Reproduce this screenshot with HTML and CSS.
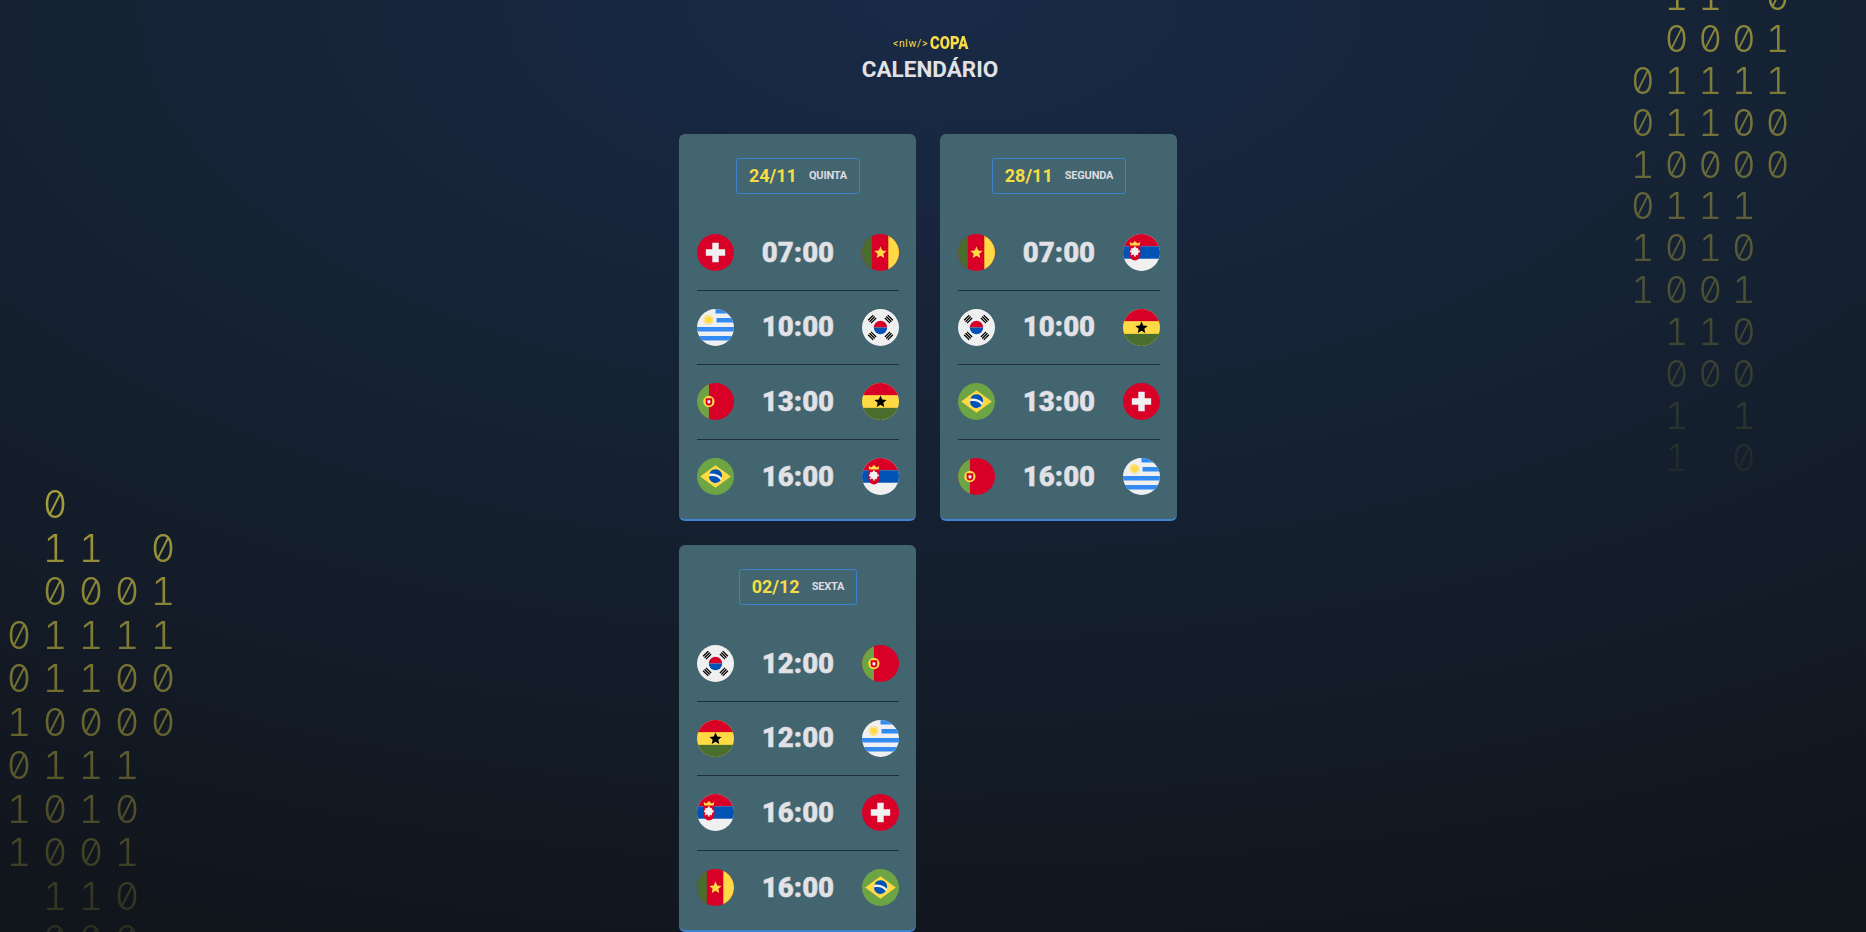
FILE: index.html
```html
<!DOCTYPE html>
<html lang="pt-BR">
<head>
<meta charset="utf-8">
<title>NLW Copa - Calendário</title>
<link rel="stylesheet" href="styles.css">
</head>
<body>
<svg class="defs" width="0" height="0" aria-hidden="true">
  <defs>
    <clipPath id="c"><circle cx="256" cy="256" r="256"/></clipPath>
    <symbol id="star" viewBox="0 0 100 100"><path d="M50 4l13.500 30.800 33.500 3.300-25.200 22.300 7.300 32.800L50 75.900 20.900 93.200l7.300-32.800L3 38.100l33.500-3.300z"/></symbol>
    <symbol id="sw" viewBox="0 0 512 512"><circle cx="256" cy="256" r="256" fill="#d80027"/><path fill="#f0f0f0" d="M389.600 211.500h-89.100v-89.100h-89v89.100h-89.100v89h89.100v89.100h89v-89.100h89.100z"/></symbol>
    <symbol id="cm" viewBox="0 0 512 512"><g clip-path="url(#c)"><rect width="512" height="512" fill="#d80027"/><rect width="136" height="512" fill="#496e2d"/><rect x="364" width="148" height="512" fill="#ffda44"/></g><use href="#star" x="166" y="166" width="180" height="180" fill="#ffda44"/></symbol>
    <symbol id="uy" viewBox="0 0 512 512"><g clip-path="url(#c)"><rect width="512" height="512" fill="#f0f0f0"/><path fill="#338af3" d="M256 0h256v62H256zM270 125h242v62H270zM0 250h512v62H0zM0 375h512v62H0z"/></g><circle cx="160" cy="150" r="46" fill="#ffda44"/><circle cx="160" cy="150" r="60" fill="none" stroke="#ffda44" stroke-width="20" stroke-dasharray="14 10"/></symbol>
    <symbol id="kr" viewBox="0 0 512 512"><circle cx="256" cy="256" r="256" fill="#f0f0f0"/><path fill="#d80027" d="M163 256a93 93 0 0 1 186 0z"/><path fill="#0052b4" d="M163 256a93 93 0 0 0 186 0z"/><g fill="none" stroke="#000" stroke-width="18"><path d="M206 64h100M206 92h100M206 120h100" transform="rotate(-45 256 256)"/><path d="M206 64h100M206 92h100M206 120h100" transform="rotate(45 256 256)"/><path d="M206 64h100M206 92h100M206 120h100" transform="rotate(135 256 256)"/><path d="M206 64h100M206 92h100M206 120h100" transform="rotate(-135 256 256)"/></g></symbol>
    <symbol id="pt" viewBox="0 0 512 512"><g clip-path="url(#c)"><rect width="512" height="512" fill="#d80027"/><rect width="165" height="512" fill="#6da544"/></g><circle cx="165" cy="256" r="78" fill="#ffda44"/><path fill="#d80027" d="M120 210h90v55a45 45 0 0 1-90 0z"/><path fill="#f0f0f0" d="M146 238h38v28a19 19 0 0 1-38 0z"/></symbol>
    <symbol id="gh" viewBox="0 0 512 512"><g clip-path="url(#c)"><rect width="512" height="512" fill="#ffda44"/><rect width="512" height="168" fill="#d80027"/><rect y="344" width="512" height="168" fill="#496e2d"/></g><use href="#star" x="166" y="166" width="180" height="180" fill="#000"/></symbol>
    <symbol id="br" viewBox="0 0 512 512"><circle cx="256" cy="256" r="256" fill="#6da544"/><path fill="#ffda44" d="M256 100l212 156-212 156L44 256z"/><circle cx="256" cy="256" r="90" fill="#f0f0f0"/><path fill="#0052b4" d="M211 250c-16 0-31 2-45 7a90 90 0 0 0 163 51c-26-36-69-58-118-58zM344 272a90 90 0 0 0-172-55 222 222 0 0 1 172 55z"/></symbol>
    <symbol id="rs" viewBox="0 0 512 512"><g clip-path="url(#c)"><rect width="512" height="512" fill="#f0f0f0"/><rect width="512" height="170" fill="#d80027"/><rect y="170" width="512" height="172" fill="#0052b4"/></g><path fill="#ffda44" d="M100 160l-8-50 36 22 37-36 37 36 36-22-8 50z"/><path fill="#d80027" d="M90 165h150v125a75 75 0 0 1-150 0z"/><circle cx="165" cy="240" r="52" fill="#f0f0f0"/><path fill="#f0f0f0" d="M153 172h24v140h-24zM97 228h136v24H97zM120 195l90 90-14 14-90-90zM210 209l-90 90-14-14 90-90z"/></symbol>
  </defs>
</svg>

<div class="bin bin-left" aria-hidden="true">
  <span></span><span>0</span><span></span><span></span><span></span>
  <span></span><span>1</span><span>1</span><span></span><span>0</span>
  <span></span><span>0</span><span>0</span><span>0</span><span>1</span>
  <span>0</span><span>1</span><span>1</span><span>1</span><span>1</span>
  <span>0</span><span>1</span><span>1</span><span>0</span><span>0</span>
  <span>1</span><span>0</span><span>0</span><span>0</span><span>0</span>
  <span>0</span><span>1</span><span>1</span><span>1</span><span></span>
  <span>1</span><span>0</span><span>1</span><span>0</span><span></span>
  <span>1</span><span>0</span><span>0</span><span>1</span><span></span>
  <span></span><span>1</span><span>1</span><span>0</span><span></span>
  <span></span><span>0</span><span>0</span><span>0</span><span></span>
</div>
<div class="bin bin-right" aria-hidden="true">
  <span></span><span>1</span><span>1</span><span></span><span>0</span>
  <span></span><span>0</span><span>0</span><span>0</span><span>1</span>
  <span>0</span><span>1</span><span>1</span><span>1</span><span>1</span>
  <span>0</span><span>1</span><span>1</span><span>0</span><span>0</span>
  <span>1</span><span>0</span><span>0</span><span>0</span><span>0</span>
  <span>0</span><span>1</span><span>1</span><span>1</span><span></span>
  <span>1</span><span>0</span><span>1</span><span>0</span><span></span>
  <span>1</span><span>0</span><span>0</span><span>1</span><span></span>
  <span></span><span>1</span><span>1</span><span>0</span><span></span>
  <span></span><span>0</span><span>0</span><span>0</span><span></span>
  <span></span><span>1</span><span></span><span>1</span><span></span>
  <span></span><span>1</span><span></span><span>0</span><span></span>
</div>

<div class="page">
  <header class="header">
    <div class="logo"><span class="logo-nlw">&lt;nlw/&gt;</span><span class="logo-copa">COPA</span></div>
    <h1 class="title">CALENDÁRIO</h1>
  </header>
  <main class="cards">
    <section class="card">
      <h2 class="date"><span class="date-day">24/11</span><span class="date-week">QUINTA</span></h2>
      <ul class="games">
        <li class="game"><svg class="flag"><use href="#sw"/></svg><strong class="time">07:00</strong><svg class="flag"><use href="#cm"/></svg></li>
        <li class="game"><svg class="flag"><use href="#uy"/></svg><strong class="time">10:00</strong><svg class="flag"><use href="#kr"/></svg></li>
        <li class="game"><svg class="flag"><use href="#pt"/></svg><strong class="time">13:00</strong><svg class="flag"><use href="#gh"/></svg></li>
        <li class="game"><svg class="flag"><use href="#br"/></svg><strong class="time">16:00</strong><svg class="flag"><use href="#rs"/></svg></li>
      </ul>
    </section>
    <section class="card">
      <h2 class="date"><span class="date-day">28/11</span><span class="date-week">SEGUNDA</span></h2>
      <ul class="games">
        <li class="game"><svg class="flag"><use href="#cm"/></svg><strong class="time">07:00</strong><svg class="flag"><use href="#rs"/></svg></li>
        <li class="game"><svg class="flag"><use href="#kr"/></svg><strong class="time">10:00</strong><svg class="flag"><use href="#gh"/></svg></li>
        <li class="game"><svg class="flag"><use href="#br"/></svg><strong class="time">13:00</strong><svg class="flag"><use href="#sw"/></svg></li>
        <li class="game"><svg class="flag"><use href="#pt"/></svg><strong class="time">16:00</strong><svg class="flag"><use href="#uy"/></svg></li>
      </ul>
    </section>
    <section class="card">
      <h2 class="date"><span class="date-day">02/12</span><span class="date-week">SEXTA</span></h2>
      <ul class="games">
        <li class="game"><svg class="flag"><use href="#kr"/></svg><strong class="time">12:00</strong><svg class="flag"><use href="#pt"/></svg></li>
        <li class="game"><svg class="flag"><use href="#gh"/></svg><strong class="time">12:00</strong><svg class="flag"><use href="#uy"/></svg></li>
        <li class="game"><svg class="flag"><use href="#rs"/></svg><strong class="time">16:00</strong><svg class="flag"><use href="#sw"/></svg></li>
        <li class="game"><svg class="flag"><use href="#cm"/></svg><strong class="time">16:00</strong><svg class="flag"><use href="#br"/></svg></li>
      </ul>
    </section>
  </main>
</div>
</body>
</html>
```
FILE: styles.css
```css
* { box-sizing: border-box; margin: 0; padding: 0; }
html, body { height: 932px; overflow: hidden; }
body {
  position: relative;
  font-family: Roboto, "Liberation Sans", sans-serif;
  color: #e1e1e6;
  background: radial-gradient(ellipse 2000px 1000px at 50% 0, #192a47 0%, #152233 45%, #11151c 100%);
}
.defs { position: absolute; }

.bin {
  position: absolute;
  display: grid;
  font-family: Inter, sans-serif;
  font-weight: 300;
  font-feature-settings: "zero", "tnum";
  color: #d0c23e;
  text-align: center;
  -webkit-mask-image: linear-gradient(to bottom, rgba(0,0,0,.8), rgba(0,0,0,.1));
  mask-image: linear-gradient(to bottom, rgba(0,0,0,.8), rgba(0,0,0,.1));
}
.bin-left {
  left: 1px;
  top: 483px;
  grid-template-columns: repeat(5, 36px);
  grid-auto-rows: 43.5px;
  font-size: 38px;
  line-height: 43.5px;
}
.bin-right {
  left: 1626px;
  top: -23px;
  grid-template-columns: repeat(5, 33.7px);
  grid-auto-rows: 41.9px;
  font-size: 36.5px;
  line-height: 41.9px;
  -webkit-mask-image: linear-gradient(to bottom, rgba(0,0,0,.7), rgba(0,0,0,.05));
  mask-image: linear-gradient(to bottom, rgba(0,0,0,.7), rgba(0,0,0,.05));
}

.page {
  position: relative;
  width: 1860px;
  display: flex;
  flex-direction: column;
  align-items: center;
}
.header {
  height: 134px;
  padding-top: 33px;
  display: flex;
  flex-direction: column;
  align-items: center;
}
.logo {
  display: flex;
  align-items: center;
  height: 20px;
  color: #f7dd43;
}
.logo-nlw {
  font-size: 10.5px;
  letter-spacing: .6px;
  margin-right: 2px;
}
.logo-copa {
  display: inline-block;
  width: 37px;
  font-size: 19px;
  font-weight: 900;
  line-height: 20px;
  transform: scaleX(.78);
  transform-origin: left center;
  white-space: nowrap;
}
.title {
  font-size: 22.5px;
  font-weight: 700;
  line-height: 26px;
  margin-top: 3px;
}

.cards {
  width: 502px;
  display: flex;
  flex-wrap: wrap;
  gap: 24px;
}
.card {
  width: 237px;
  height: 387px;
  padding: 24px 17px 0 18px;
  display: flex;
  flex-direction: column;
  align-items: center;
  background: #426570;
  border-bottom: 2px solid #3f82d0;
  border-radius: 6px;
}
.date {
  display: flex;
  align-items: center;
  gap: 12px;
  height: 36px;
  padding: 0 12px 1px;
  border: 1px solid #3b80cc;
  border-radius: 3px;
  font-weight: 700;
  font-size: inherit;
}
.date-day { font-size: 18px; color: #f7dd43; }
.date-week { font-size: 11px; color: #dcdce2; letter-spacing: -.2px; }

.games {
  list-style: none;
  width: 100%;
  margin-top: 22px;
}
.game {
  display: flex;
  align-items: center;
  justify-content: space-between;
  height: 74.5px;
  border-bottom: 1px solid #1d2f3c;
}
.game:last-child { border-bottom: 0; }
.flag { width: 37px; height: 37px; display: block; }
.time { font-size: 27.6px; font-weight: 900; line-height: 1; color: #e1e1e6; -webkit-text-stroke: .4px #e1e1e6; }
```
